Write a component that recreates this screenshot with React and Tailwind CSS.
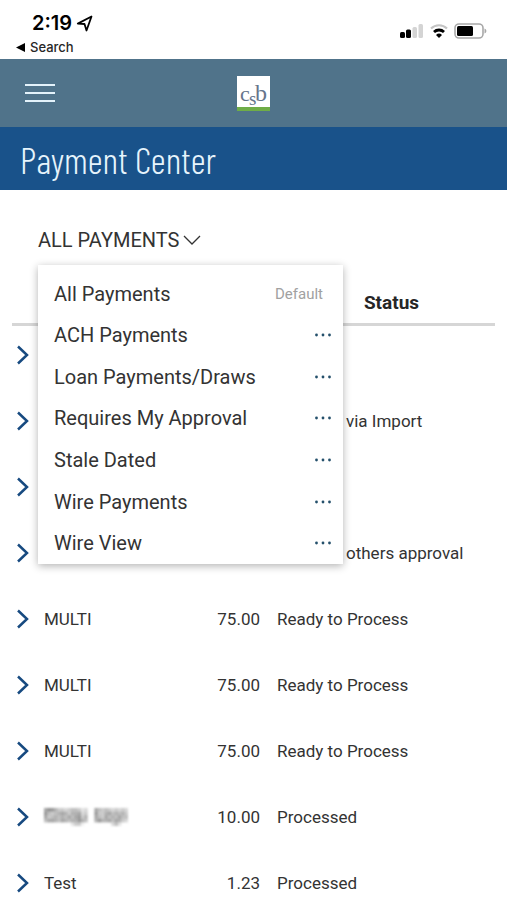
const views = [
  'All Payments',
  'ACH Payments',
  'Loan Payments/Draws',
  'Requires My Approval',
  'Stale Dated',
  'Wire Payments',
  'Wire View',
]

const payments = [
  {},
  { status: 'via Import', partial: true },
  {},
  { status: 'others approval', partial: true },
  { name: 'MULTI', amount: '75.00', status: 'Ready to Process' },
  { name: 'MULTI', amount: '75.00', status: 'Ready to Process' },
  { name: 'MULTI', amount: '75.00', status: 'Ready to Process' },
  { redacted: true, amount: '10.00', status: 'Processed' },
  { name: 'Test', amount: '1.23', status: 'Processed' },
]

function StatusBar() {
  return (
    <div className="flex h-[59px] shrink-0 justify-between pl-4 pr-5 pt-[11px] font-['Inter',sans-serif] text-black">
      <div>
        <div className="flex items-center gap-1 pl-4 text-xl leading-6 font-semibold">
          2:19
          <svg width="17" height="17" viewBox="0 0 17 17" fill="none" stroke="currentColor" strokeWidth="1.800" strokeLinejoin="round">
            <path d="M15.500 1.500 1.800 8.600l6.700.4 2 6.500z" />
          </svg>
        </div>
        <a href="#search" className="flex items-center gap-1 text-[13px] leading-6 font-medium text-neutral-800">
          <svg width="10" height="9" viewBox="0 0 10 9" fill="#000">
            <path d="M0 4.500 9 0v9z" />
          </svg>
          Search
        </a>
      </div>

      <div className="flex h-10 items-center gap-1.5">
        <svg width="24" height="16" viewBox="0 0 24 16">
          <rect x="0" y="9" width="5" height="6" rx="1.500" />
          <rect x="6" y="6.500" width="5" height="8.500" rx="1.500" />
          <rect x="12.500" y="4" width="4.500" height="11" rx="1.500" fill="#d4d4d4" />
          <rect x="18.500" y="1" width="4.500" height="14" rx="1.500" fill="#d4d4d4" />
        </svg>
        <svg width="18" height="16" viewBox="0 0 18 16" fill="none">
          <path d="M1 5.500a11.500 11.500 0 0 1 16 0" stroke="#c4c4c4" strokeWidth="2.200" />
          <path d="M4 9a7.200 7.200 0 0 1 10 0" stroke="#000" strokeWidth="2.800" />
          <path d="M9 15l-3-3a4.300 4.300 0 0 1 6 0z" fill="#000" />
        </svg>
        <svg width="33" height="16" viewBox="0 0 33 16">
          <rect x="1" y="1" width="28" height="14" rx="4" fill="#fff" stroke="#a8a8a8" strokeWidth="1.600" />
          <rect x="3" y="3" width="16" height="10" rx="1.500" />
          <path d="M30.500 5.500v5c2.500-1 2.500-4 0-5z" fill="#a8a8a8" />
        </svg>
      </div>
    </div>
  )
}

function Logo() {
  return (
    <svg width="33" height="35" viewBox="0 0 33 35" role="img" aria-label="csb">
      <rect width="33" height="35" fill="#fff" />
      <rect y="31" width="33" height="4" fill="#6fad47" />
      <g fill="#66758c" fontFamily="Liberation Serif, serif">
        <text x="3" y="25" fontSize="22">c</text>
        <text x="12" y="29" fontSize="19">s</text>
        <text x="18" y="25" fontSize="24">b</text>
      </g>
    </svg>
  )
}

// mosaic over a payee name that must not be readable
const mosaic = [
  '7986443455423007545434343',
  '8545676466734008446756564',
  '7456565757846007547565755',
  '5776576566865006866757643',
  '0000000024410000000035200',
]

function HiddenName() {
  return (
    <svg width="84" height="18" viewBox="0 0 25 5" preserveAspectRatio="none" className="blur-[1px]" role="img" aria-label="Hidden name">
      {mosaic.flatMap((line, y) =>
        [...line].map((level, x) => (
          <rect key={`${x}-${y}`} x={x} y={y} width="1" height="1" fill="#555" opacity={Number(level) / 13} />
        )),
      )}
    </svg>
  )
}

function ExpandIcon() {
  return (
    <svg width="12" height="20" viewBox="0 0 12 20" fill="none" stroke="#174a80" strokeWidth="2.500">
      <path d="M1 1.500 10 10 1 18.500" />
    </svg>
  )
}

function ViewMenu() {
  return (
    <ul className="absolute left-0 top-full z-10 grid h-[299px] w-[305px] auto-rows-fr bg-white pt-2 shadow-[0_2px_8px_rgba(0,0,0,0.3)]">
      {views.map((view, i) => (
        <li key={view} className="flex items-center justify-between pl-4 pr-3">
          <button type="button" className="text-xl leading-6">{view}</button>
          {i === 0 ? (
            <span className="pr-2 text-[15px] leading-6 text-neutral-400">Default</span>
          ) : (
            <button type="button" aria-label={`${view} options`}>
              <svg width="16" height="4" viewBox="0 0 16 4" fill="#24506b">
                <circle cx="1.500" cy="2" r="1.400" />
                <circle cx="8" cy="2" r="1.400" />
                <circle cx="14.500" cy="2" r="1.400" />
              </svg>
            </button>
          )}
        </li>
      ))}
    </ul>
  )
}

export default function App() {
  return (
    <div className="flex h-screen flex-col overflow-hidden bg-white font-['Roboto',sans-serif] text-[#333]">
      <StatusBar />

      <header className="grid h-[68px] shrink-0 grid-cols-3 items-center bg-[#50738a] px-[25px]">
        <button type="button" aria-label="Menu" className="grid w-[30px] gap-[6px]">
          <span className="h-[2px] bg-[#e4f2fa]" />
          <span className="h-[2px] bg-[#e4f2fa]" />
          <span className="h-[2px] bg-[#e4f2fa]" />
        </button>
        <a href="#home" className="justify-self-center">
          <Logo />
        </a>
      </header>

      <h1 className="flex h-[63px] shrink-0 items-center bg-[#19528a] px-5 font-['Barlow_Condensed','Roboto_Condensed','Liberation_Sans_Narrow','Roboto',sans-serif] text-[37px] leading-10 font-light text-[#e6f4fc]">
        Payment Center
      </h1>

      <main className="px-3 pt-9">
        <div className="relative ml-[26px] h-[39px]">
          <button type="button" aria-expanded="true" className="flex items-center gap-1 text-xl leading-7">
            ALL PAYMENTS
            <svg width="18" height="10" viewBox="0 0 18 10" fill="none" stroke="currentColor" strokeWidth="1.300">
              <path d="M1 1l8 8 8-8" />
            </svg>
          </button>
          <ViewMenu />
        </div>

        <table className="w-full table-fixed">
          <thead>
            <tr className="border-b-3 border-[#d6d6d6]">
              <td className="w-8" />
              <td />
              <td className="w-[88px]" />
              <th scope="col" className="w-[235px] pb-2 pl-7 pt-[26px] text-center text-[19px] leading-6 font-bold text-neutral-800">
                Status
              </th>
            </tr>
          </thead>
          <tbody className="text-[17px] leading-6">
            {payments.map((payment, i) => (
              <tr key={i} className="align-top">
                <td className="pb-[25px] pl-[5px] pt-[17px]">
                  <button type="button" aria-label="Show details" className="flex h-6 items-center">
                    <ExpandIcon />
                  </button>
                </td>
                <td className="pt-[17px]">
                  {payment.redacted ? (
                    <div className="flex h-6 items-center">
                      <HiddenName />
                    </div>
                  ) : (
                    payment.name
                  )}
                </td>
                <td className="pt-[17px] text-right">{payment.amount}</td>
                <td className={payment.partial ? 'pl-[86px] pt-[17px]' : 'pl-[17px] pt-[17px]'}>{payment.status}</td>
              </tr>
            ))}
          </tbody>
        </table>
      </main>
    </div>
  )
}
